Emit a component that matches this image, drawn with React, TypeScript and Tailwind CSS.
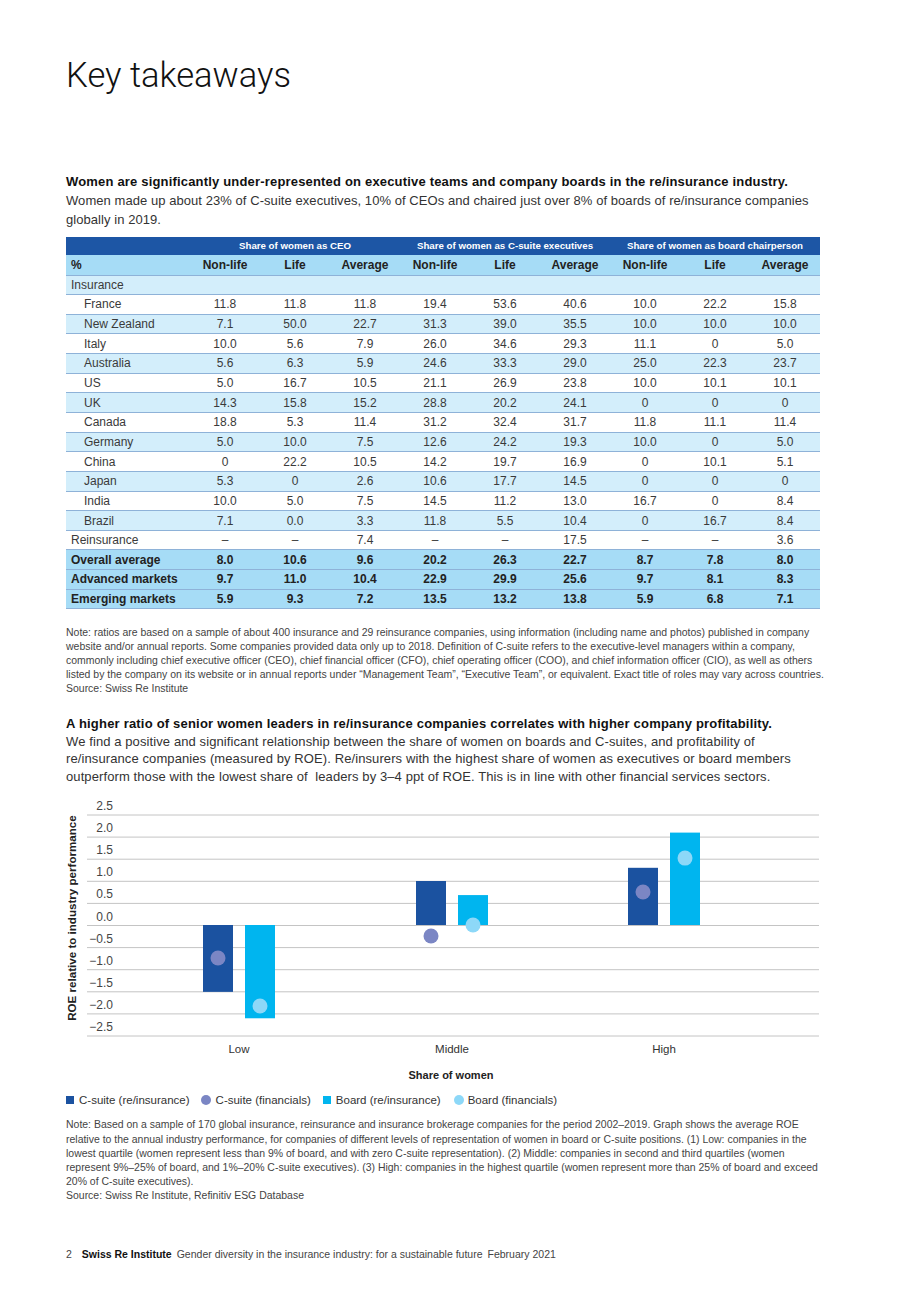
import React from "react";

const FONT = { fontFamily: '"Liberation Sans", Arial, sans-serif' };

type Row = { label: string; values: string[]; kind: "country" | "plain" | "total"; shaded?: boolean };

const rows: Row[] = [
  { label: "Insurance", values: ["", "", "", "", "", "", "", "", ""], kind: "plain", shaded: true },
  { label: "France", values: ["11.8", "11.8", "11.8", "19.4", "53.6", "40.6", "10.0", "22.2", "15.8"], kind: "country" },
  { label: "New Zealand", values: ["7.1", "50.0", "22.7", "31.3", "39.0", "35.5", "10.0", "10.0", "10.0"], kind: "country", shaded: true },
  { label: "Italy", values: ["10.0", "5.6", "7.9", "26.0", "34.6", "29.3", "11.1", "0", "5.0"], kind: "country" },
  { label: "Australia", values: ["5.6", "6.3", "5.9", "24.6", "33.3", "29.0", "25.0", "22.3", "23.7"], kind: "country", shaded: true },
  { label: "US", values: ["5.0", "16.7", "10.5", "21.1", "26.9", "23.8", "10.0", "10.1", "10.1"], kind: "country" },
  { label: "UK", values: ["14.3", "15.8", "15.2", "28.8", "20.2", "24.1", "0", "0", "0"], kind: "country", shaded: true },
  { label: "Canada", values: ["18.8", "5.3", "11.4", "31.2", "32.4", "31.7", "11.8", "11.1", "11.4"], kind: "country" },
  { label: "Germany", values: ["5.0", "10.0", "7.5", "12.6", "24.2", "19.3", "10.0", "0", "5.0"], kind: "country", shaded: true },
  { label: "China", values: ["0", "22.2", "10.5", "14.2", "19.7", "16.9", "0", "10.1", "5.1"], kind: "country" },
  { label: "Japan", values: ["5.3", "0", "2.6", "10.6", "17.7", "14.5", "0", "0", "0"], kind: "country", shaded: true },
  { label: "India", values: ["10.0", "5.0", "7.5", "14.5", "11.2", "13.0", "16.7", "0", "8.4"], kind: "country" },
  { label: "Brazil", values: ["7.1", "0.0", "3.3", "11.8", "5.5", "10.4", "0", "16.7", "8.4"], kind: "country", shaded: true },
  { label: "Reinsurance", values: ["–", "–", "7.4", "–", "–", "17.5", "–", "–", "3.6"], kind: "plain" },
  { label: "Overall average", values: ["8.0", "10.6", "9.6", "20.2", "26.3", "22.7", "8.7", "7.8", "8.0"], kind: "total" },
  { label: "Advanced markets", values: ["9.7", "11.0", "10.4", "22.9", "29.9", "25.6", "9.7", "8.1", "8.3"], kind: "total" },
  { label: "Emerging markets", values: ["5.9", "9.3", "7.2", "13.5", "13.2", "13.8", "5.9", "6.8", "7.1"], kind: "total" },
];

const subHeads = ["Non-life", "Life", "Average", "Non-life", "Life", "Average", "Non-life", "Life", "Average"];

function DataTable() {
  return (
    <table className="mt-[8px] w-[754px] table-fixed border-collapse text-[12px] text-[#3a3a3a]">
      <colgroup>
        <col className="w-[124px]" />
        {subHeads.map((_, i) => (
          <col key={i} className="w-[70px]" />
        ))}
      </colgroup>
      <thead>
        <tr className="h-[18px] bg-[#1d56a5] text-[9.7px] font-bold text-white">
          <th />
          <th colSpan={3} className="text-center font-bold">Share of women as CEO</th>
          <th colSpan={3} className="text-center font-bold">Share of women as C-suite executives</th>
          <th colSpan={3} className="text-center font-bold">Share of women as board chairperson</th>
        </tr>
        <tr className="h-[20px] border-b border-[#8eb2d8] bg-[#a6dcf6] font-bold text-[#222]">
          <th className="pl-[5px] text-left font-bold">%</th>
          {subHeads.map((h, i) => (
            <th key={i} className="text-center font-bold">{h}</th>
          ))}
        </tr>
      </thead>
      <tbody>
        {rows.map((r) => {
          const bg = r.kind === "total" ? "bg-[#a6dcf6]" : r.shaded ? "bg-[#d3eefb]" : "bg-white";
          const weight = r.kind === "total" ? "font-bold text-[#222]" : "";
          return (
            <tr key={r.label} className={`h-[19.65px] border-b border-[#8eb2d8] ${bg} ${weight}`}>
              <td className={r.kind === "country" ? "pl-[18px]" : "pl-[5px]"}>{r.label}</td>
              {r.values.map((v, i) => (
                <td key={i} className="text-center">{v}</td>
              ))}
            </tr>
          );
        })}
      </tbody>
    </table>
  );
}

// ROE chart: zero line at y=130, 44px per ppt
const ZERO = 130;
const UNIT = 44;
const groups = [
  { label: "Low", x: 143, cs: -1.52, bd: -2.12, csDot: -0.75, bdDot: -1.84 },
  { label: "Middle", x: 356, cs: 1.0, bd: 0.68, csDot: -0.25, bdDot: 0.0 },
  { label: "High", x: 568, cs: 1.3, bd: 2.1, csDot: 0.75, bdDot: 1.52 },
];
const ticks = ["2.5", "2.0", "1.5", "1.0", "0.5", "0.0", "−0.5", "−1.0", "−1.5", "−2.0", "−2.5"];

function Chart() {
  const bar = (x: number, v: number, color: string) => {
    const y = v >= 0 ? ZERO - v * UNIT : ZERO;
    return <rect x={x} y={y} width={30} height={Math.abs(v) * UNIT} fill={color} />;
  };
  return (
    <svg width={770} height={265} className="mt-[10px] ml-[-6px] block" style={FONT}>
      {ticks.map((t, i) => {
        const y = 20 + i * 22.1;
        return (
          <g key={t}>
            <line x1={27} x2={759} y1={y} y2={y} stroke="#c4c4c4" strokeWidth={1} />
            <text x={53} y={y - 5} textAnchor="end" fontSize={12} fill="#444">{t}</text>
          </g>
        );
      })}
      <text
        transform="translate(16 123) rotate(-90)"
        textAnchor="middle"
        fontSize={11.6}
        fontWeight="bold"
        fill="#222"
      >
        ROE relative to industry performance
      </text>
      {groups.map((g) => (
        <g key={g.label}>
          {bar(g.x, g.cs, "#1b52a0")}
          {bar(g.x + 42, g.bd, "#00b5ef")}
          <circle cx={g.x + 15} cy={ZERO - g.csDot * UNIT} r={7.5} fill="#7b86c4" />
          <circle cx={g.x + 57} cy={ZERO - g.bdDot * UNIT} r={7.5} fill="#8dd8f8" />
          <text x={g.x + 36} y={258} textAnchor="middle" fontSize={11.5} fill="#333">{g.label}</text>
        </g>
      ))}
    </svg>
  );
}

function Lines({ lines, className }: { lines: string[]; className: string }) {
  return (
    <div className={className}>
      {lines.map((l, i) => (
        <div key={i} className="whitespace-nowrap">{l}</div>
      ))}
    </div>
  );
}

export default function App() {
  return (
    <div className="relative h-[1302px] w-[920px] overflow-hidden bg-white px-[66px]" style={FONT}>
      <h1
        className="mt-[55px] text-[34.6px] font-light leading-[40px] text-[#111]"
        style={{ fontFamily: 'Roboto, "Liberation Sans", sans-serif' }}
      >
        Key takeaways
      </h1>

      <div className="mt-[77px] text-[13px] leading-[19px] text-[#333]">
        <div className="whitespace-nowrap font-bold tracking-[0.18px] text-[#111]">
          Women are significantly under-represented on executive teams and company boards in the re/insurance industry.
        </div>
        <div className="whitespace-nowrap tracking-[0.06px]">
          Women made up about 23% of C-suite executives, 10% of CEOs and chaired just over 8% of boards of re/insurance companies
        </div>
        <div className="tracking-[0.06px]">globally in 2019.</div>
      </div>

      <DataTable />

      <Lines
        className="mt-[17px] text-[10.47px] leading-[14px] text-[#444]"
        lines={[
          "Note: ratios are based on a sample of about 400 insurance and 29 reinsurance companies, using information (including name and photos) published in company",
          "website and/or annual reports. Some companies provided data only up to 2018. Definition of C-suite refers to the executive-level managers within a company,",
          "commonly including chief executive officer (CEO), chief financial officer (CFO), chief operating officer (COO), and chief information officer (CIO), as well as others",
          "listed by the company on its website or in annual reports under “Management Team”, “Executive Team”, or equivalent. Exact title of roles may vary across countries.",
          "Source: Swiss Re Institute",
        ]}
      />

      <div className="mt-[19px] text-[13px] leading-[17.5px] text-[#333]">
        <div className="whitespace-nowrap font-bold tracking-[0.2px] text-[#111]">
          A higher ratio of senior women leaders in re/insurance companies correlates with higher company profitability.
        </div>
        <div className="whitespace-nowrap tracking-[0.1px]">
          We find a positive and significant relationship between the share of women on boards and C-suites, and profitability of
        </div>
        <div className="whitespace-nowrap tracking-[0.1px]">
          re/insurance companies (measured by ROE). Re/insurers with the highest share of women as executives or board members
        </div>
        <div className="whitespace-pre tracking-[0.1px]">
          outperform those with the lowest share of  leaders by 3–4 ppt of ROE. This is in line with other financial services sectors.
        </div>
      </div>

      <Chart />

      <div className="mt-[8px] w-[770px] text-center text-[11px] font-bold leading-[14px] text-[#222]">Share of women</div>

      <div className="mt-[11px] flex items-center text-[11.5px] leading-[14px] text-[#333]">
        <span className="h-[8px] w-[8px] bg-[#1b52a0]" />
        <span className="ml-[5px]">C-suite (re/insurance)</span>
        <span className="ml-[11px] h-[10px] w-[10px] rounded-full bg-[#7b86c4]" />
        <span className="ml-[5px]">C-suite (financials)</span>
        <span className="ml-[12px] h-[8px] w-[8px] bg-[#00b5ef]" />
        <span className="ml-[5px]">Board (re/insurance)</span>
        <span className="ml-[13px] h-[10px] w-[10px] rounded-full bg-[#8dd8f8]" />
        <span className="ml-[4px]">Board (financials)</span>
      </div>

      <Lines
        className="mt-[11px] text-[10.47px] leading-[14.2px] text-[#444]"
        lines={[
          "Note: Based on a sample of 170 global insurance, reinsurance and insurance brokerage companies for the period 2002–2019. Graph shows the average ROE",
          "relative to the annual industry performance, for companies of different levels of representation of women in board or C-suite positions. (1) Low: companies in the",
          "lowest quartile (women represent less than 9% of board, and with zero C-suite representation). (2) Middle: companies in second and third quartiles (women",
          "represent 9%–25% of board, and 1%–20% C-suite executives). (3) High: companies in the highest quartile (women represent more than 25% of board and exceed",
          "20% of C-suite executives).",
          "Source: Swiss Re Institute, Refinitiv ESG Database",
        ]}
      />

      <div className="mt-[43px] flex text-[10.5px] leading-[14px] text-[#444]">
        <span>2</span>
        <span className="ml-[10px] font-bold text-[#111]">Swiss Re Institute</span>
        <span className="ml-[5px]">Gender diversity in the insurance industry: for a sustainable future</span>
        <span className="ml-[5px]">February 2021</span>
      </div>
    </div>
  );
}
